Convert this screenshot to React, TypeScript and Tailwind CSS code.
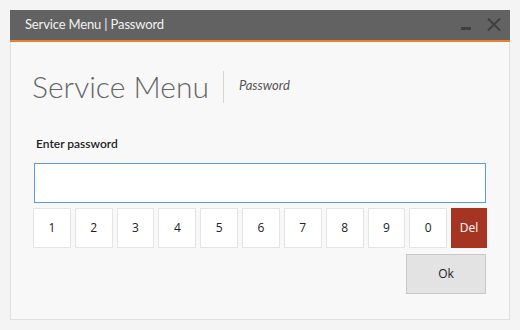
const keys = ["1", "2", "3", "4", "5", "6", "7", "8", "9", "0"];

const ServiceMenuPassword = () => (
  <div className="w-[520px] h-[330px] bg-[#f4f4f4] p-[10px] font-['Open_Sans',sans-serif]">
    <div className="flex flex-col h-[310px]">
      {/* title bar */}
      <div className="flex items-center h-[32px] bg-[#626262] border-b-2 border-[#ee7f2d] pl-[15px] pr-[9px]">
        <span className="text-[13px] tracking-[-0.15px] text-[#f2f2f2] font-['Lato',sans-serif] leading-none pb-[2px]">
          Service Menu | Password
        </span>
        <div className="ml-auto flex items-end gap-[16px] pb-[1px]">
          <div className="w-[10px] h-[3px] bg-[#3f3f3f] mb-[1px]" />
          <svg width="14" height="13" viewBox="0 0 14 13" className="text-[#3f3f3f]">
            <path d="M1 0.5 L13 12.5 M13 0.5 L1 12.5" stroke="currentColor" strokeWidth="2" fill="none" />
          </svg>
        </div>
      </div>

      {/* body */}
      <div className="flex-1 flex flex-col bg-[#f8f8f8] border-x border-b border-[#e0e0e0] px-[23px] pt-[29px]">
        <div className="flex items-center h-[32px]">
          <h1 className="text-[30px] font-light text-[#666666] font-['Lato',sans-serif] leading-none -ml-[2px] -mt-[2px]">
            Service Menu
          </h1>
          <div className="w-px h-[32px] bg-[#d6d6d6] ml-[14px] mr-[15px]" />
          <span className="text-[13px] italic text-[#555555] font-['Lato',sans-serif] -mt-[2px]">Password</span>
        </div>

        <label className="mt-[33px] pl-[2px] text-[12px] font-semibold text-[#222222] font-['Lato',sans-serif] leading-[16px]">
          Enter password
        </label>

        <input
          type="password"
          className="mt-[11px] h-[40px] w-full bg-white border border-[#5a9be0] outline-none"
        />

        <div className="flex gap-[4px] mt-[5px] -mx-px">
          {keys.map((k) => (
            <button
              key={k}
              className="flex-1 h-[40px] bg-white border border-[#e4e4e4] text-[12px] text-[#222222]"
            >
              {k}
            </button>
          ))}
          <button className="flex-1 h-[40px] bg-[#a53423] text-[12px] text-white">Del</button>
        </div>

        <div className="flex justify-end mt-[6px]">
          <button className="w-[80px] h-[40px] bg-[#e3e3e3] border border-[#c8c8c8] text-[12px] text-[#222222]">
            Ok
          </button>
        </div>
      </div>
    </div>
  </div>
);

export default function App() {
  return <ServiceMenuPassword />;
}
